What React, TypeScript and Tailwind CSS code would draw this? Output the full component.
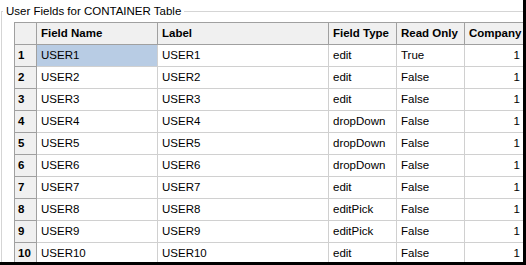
const rows = [
  { name: 'USER1', label: 'USER1', type: 'edit', ro: 'True' },
  { name: 'USER2', label: 'USER2', type: 'edit', ro: 'False' },
  { name: 'USER3', label: 'USER3', type: 'edit', ro: 'False' },
  { name: 'USER4', label: 'USER4', type: 'dropDown', ro: 'False' },
  { name: 'USER5', label: 'USER5', type: 'dropDown', ro: 'False' },
  { name: 'USER6', label: 'USER6', type: 'dropDown', ro: 'False' },
  { name: 'USER7', label: 'USER7', type: 'edit', ro: 'False' },
  { name: 'USER8', label: 'USER8', type: 'editPick', ro: 'False' },
  { name: 'USER9', label: 'USER9', type: 'editPick', ro: 'False' },
  { name: 'USER10', label: 'USER10', type: 'edit', ro: 'False' },
];

const cols = 'grid grid-cols-[22px_121px_171px_68px_68px_61px]';

export default function App() {
  return (
    <div className="w-[526px] h-[265px] overflow-hidden bg-white border-r-[3px] border-b-[3px] border-black font-['Liberation_Sans',Arial,sans-serif] text-[11px] text-black whitespace-nowrap">
      <fieldset className="ml-[1px] mt-[4px] h-[280px] border-t border-l border-[#d5d5d5] pt-[3px]">
        <legend className="ml-[1px] px-[3px] text-[11.5px] leading-[15px] text-black">User Fields for CONTAINER Table</legend>
        <div className="ml-[12px] w-[512px] border-t border-l border-[#a0a0a0]">
          <div className={`${cols} h-[22px] bg-[#f0f0f0] border-b border-[#a0a0a0] font-bold text-[11.5px]`}>
            <div className="border-r border-[#a0a0a0]" />
            {['Field Name', 'Label', 'Field Type', 'Read Only', 'Company'].map((h) => (
              <div key={h} className="flex items-center px-[4px] border-r border-[#a0a0a0] overflow-hidden">
                {h}
              </div>
            ))}
          </div>
          {rows.map((r, i) => (
            <div key={r.name} className={`${cols} h-[22px] border-b border-[#d0d0d0] text-[11.5px]`}>
              <div className="flex items-center px-[3px] bg-[#f0f0f0] font-bold border-r border-[#a0a0a0] -mb-px border-b border-b-[#a0a0a0]">
                {i + 1}
              </div>
              <div className={`flex items-center px-[4px] border-r border-[#d0d0d0] ${i === 0 ? 'bg-[#b8cce4]' : ''}`}>
                {r.name}
              </div>
              <div className="flex items-center px-[4px] border-r border-[#d0d0d0]">{r.label}</div>
              <div className="flex items-center px-[4px] border-r border-[#d0d0d0]">{r.type}</div>
              <div className="flex items-center px-[4px] border-r border-[#d0d0d0]">{r.ro}</div>
              <div className="flex items-center justify-end pr-[5px] border-r border-[#d0d0d0]">1</div>
            </div>
          ))}
        </div>
      </fieldset>
    </div>
  );
}
